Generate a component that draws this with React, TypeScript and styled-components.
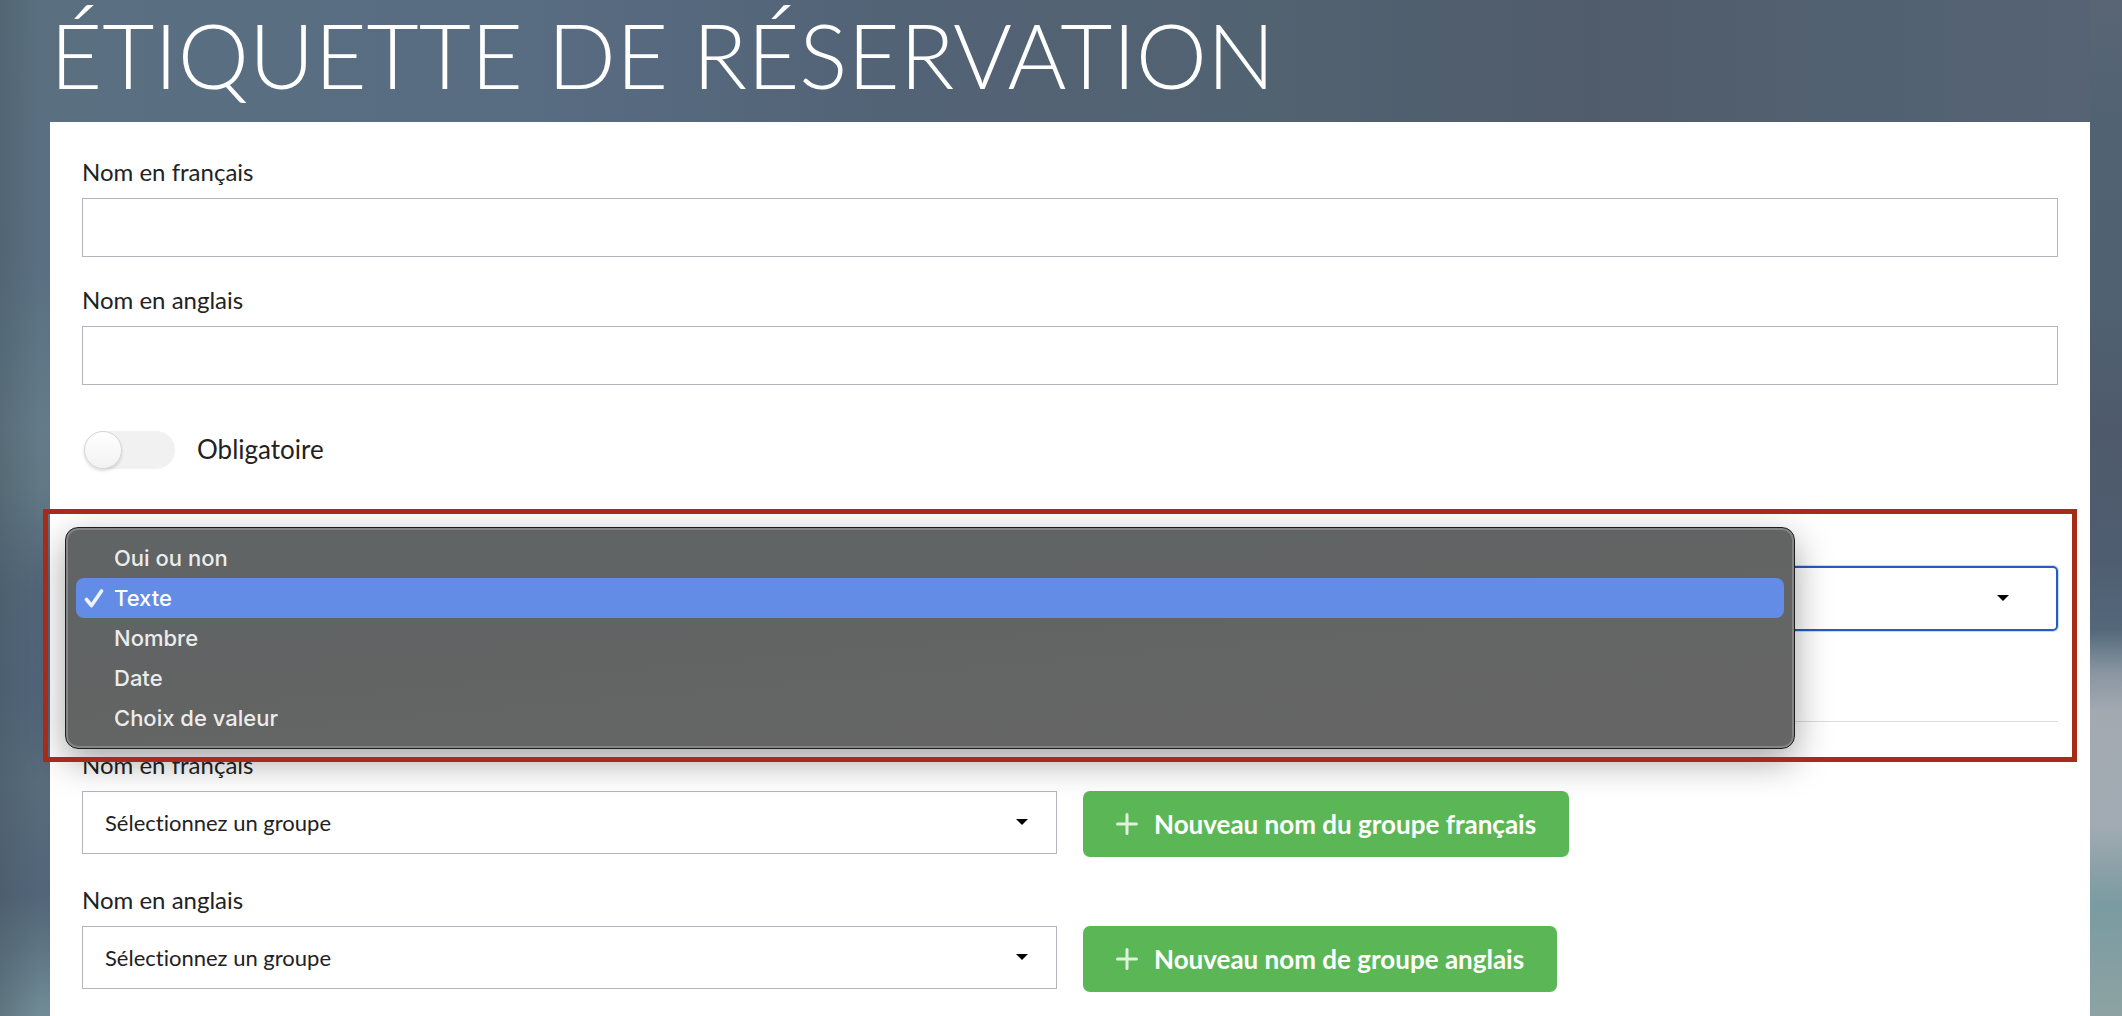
import React, { useState } from "react";
import styled, { createGlobalStyle } from "styled-components";

const GlobalStyle = createGlobalStyle`
  *, *::before, *::after { box-sizing: border-box; }
  html { height: 100%; }
  body {
    margin: 0;
    min-height: 100%;
    overflow: hidden;
    font-family: Lato, "Liberation Sans", sans-serif;
    font-variant-ligatures: none;
    color: #222;
    background: linear-gradient(90deg, #5a7080 0%, #586c82 25%, #536376 42%, #516271 60%, #505c6c 75%, #526171 88%, #566374 100%);
  }
`;

const Page = styled.div`
  position: relative;
  height: 100vh;
  padding: 0 32px 0 50px;
  overflow: hidden;
  background:
    linear-gradient(90deg, rgba(70, 85, 95, 0.4), transparent 40px),
    linear-gradient(180deg, #5a7080 0%, #5a6f82 25%, #5c7484 32%, #647b89 42%, #617885 48%, #53677a 58%, #51657a 68%, #586c7c 77%, #526579 88%, #5d7483 93%, #718c97 100%) left / 50px 100% no-repeat,
    linear-gradient(180deg, #596575 0%, #516272 12%, #506171 30%, #4e5a6c 42%, #4f5d70 55%, #53687a 62%, #8794a0 66%, #a2a9b1 70%, #a2abb3 81%, #8ea2a8 85%, #7a9ba2 89%, #8da3a3 100%) right / 32px 100% no-repeat;
`;

const Title = styled.h1`
  margin: 0;
  padding-bottom: 14px;
  font-size: 90px;
  line-height: 108px;
  font-weight: 300;
  color: #fff;
  white-space: nowrap;
`;

const Card = styled.main`
  min-height: 100vh;
  padding: 32px;
  background: #fff;
`;

const Form = styled.form`
  display: flex;
  flex-direction: column;
`;

const Field = styled.div`
  display: flex;
  flex-direction: column;
  gap: 8px;
  margin-bottom: 25px;
`;

const Label = styled.label`
  font-size: 24px;
  line-height: 36px;
`;

const TextInput = styled.input`
  height: 59px;
  padding: 0 22px;
  border: 1px solid #b3b5ba;
  border-radius: 0;
  font: inherit;
  font-size: 22px;
  outline: none;
`;

const Switch = styled.label`
  display: flex;
  align-items: flex-start;
  align-self: flex-start;
  gap: 22px;
  height: 38px;
  margin: 21px 0 57px 2px;
  font-size: 26px;
  line-height: 36px;
`;

const SwitchInput = styled.input`
  appearance: none;
  width: 91px;
  height: 38px;
  margin: 0;
  border-radius: 19px;
  background: #f1f1f1;
  &::before {
    content: "";
    display: block;
    width: 38px;
    height: 38px;
    border: 1px solid #d6d6d6;
    border-radius: 50%;
    background: linear-gradient(#fff, #f2f2f2);
    box-shadow: 0 2px 3px rgba(0, 0, 0, 0.14);
  }
  &:checked::before { margin-left: auto; }
`;

const TypeSection = styled.section`
  position: relative;
  padding: 40px 0 90px;
  margin-bottom: 25px;
  border-bottom: 1px solid #dcdcdc;
`;

const Highlight = styled.div`
  position: absolute;
  z-index: 2;
  inset: -17px -19px -41px -39px;
  border: 5px solid #a62b18;
  pointer-events: none;
`;

const SelectBox = styled.div`
  position: relative;
  flex: 1;
`;

const Select = styled.select<{ $focused?: boolean }>`
  display: block;
  appearance: none;
  width: 100%;
  height: ${(p) => (p.$focused ? 65 : 63)}px;
  padding: 0 56px 0 22px;
  border: ${(p) => (p.$focused ? "2px solid #245cc4" : "1px solid #b3b5ba")};
  border-radius: ${(p) => (p.$focused ? 5 : 0)}px;
  box-shadow: ${(p) => (p.$focused ? "0 0 0 1px #c6dbf6" : "none")};
  background: transparent;
  color: #222;
  font: inherit;
  font-size: 22px;
  font-variant-ligatures: none;
  outline: none;
`;

const Caret = styled.svg<{ $inset: number }>`
  position: absolute;
  top: 50%;
  right: ${(p) => p.$inset}px;
  width: 12px;
  height: 6px;
  margin-top: -4px;
  pointer-events: none;
`;

const Menu = styled.ul`
  position: absolute;
  z-index: 1;
  top: 1px;
  left: -17px;
  right: 263px;
  margin: 0;
  padding: 10px;
  list-style: none;
  border: 1px solid #1d1d1d;
  border-radius: 13px;
  background: linear-gradient(175deg, #606464, #626464 45%, #656565 80%);
  box-shadow: inset 0 0 0 2px #858585, 0 12px 36px rgba(0, 0, 0, 0.36);
  font-family: Inter, "Liberation Sans", sans-serif;
  font-size: 22px;
  font-weight: 500;
  line-height: 40px;
`;

const MenuItem = styled.li<{ $selected: boolean }>`
  display: flex;
  align-items: center;
  height: 40px;
  border-radius: 8px;
  color: ${(p) => (p.$selected ? "#fff" : "#ececec")};
  background: ${(p) => (p.$selected ? "#628ce5" : "transparent")};
`;

const CheckSlot = styled.span`
  display: flex;
  width: 38px;
  padding-left: 8px;
`;

const GroupRow = styled.div`
  display: flex;
  align-items: flex-start;
  gap: 26px;
`;

const GroupSelectCell = styled.div`
  display: flex;
  width: calc(50% - 13px);
`;

const AddButton = styled.button`
  display: flex;
  align-items: center;
  gap: 16px;
  height: 66px;
  padding: 0 33px;
  border: 0;
  border-radius: 7px;
  background: #5bb756;
  color: #fff;
  font: inherit;
  font-size: 26px;
  font-weight: 700;
  line-height: 32px;
  white-space: nowrap;
`;

const types = ["Oui ou non", "Texte", "Nombre", "Date", "Choix de valeur"];

const groups = [
  { id: "group-fr", label: "Nom en français", action: "Nouveau nom du groupe français" },
  { id: "group-en", label: "Nom en anglais", action: "Nouveau nom de groupe anglais" },
];

function CaretIcon({ inset }: { inset: number }) {
  return (
    <Caret $inset={inset} viewBox="0 0 12 6" aria-hidden="true">
      <path d="M0 0H12L6 6Z" fill="#000" />
    </Caret>
  );
}

export default function App() {
  const [type, setType] = useState("Texte");
  return (
    <>
      <GlobalStyle />
      <Page>
        <Title>ÉTIQUETTE DE RÉSERVATION</Title>
        <Card>
          <Form>
            <Field>
              <Label htmlFor="name-fr">Nom en français</Label>
              <TextInput id="name-fr" type="text" />
            </Field>
            <Field>
              <Label htmlFor="name-en">Nom en anglais</Label>
              <TextInput id="name-en" type="text" />
            </Field>
            <Switch>
              <SwitchInput type="checkbox" role="switch" />
              Obligatoire
            </Switch>
            <TypeSection>
              <SelectBox>
                <Select $focused aria-label="Type" value={type} onChange={(e) => setType(e.target.value)}>
                  {types.map((t) => (
                    <option key={t}>{t}</option>
                  ))}
                </Select>
                <CaretIcon inset={49} />
              </SelectBox>
              <Menu>
                {types.map((t) => (
                  <MenuItem key={t} $selected={t === type} onClick={() => setType(t)}>
                    <CheckSlot>
                      {t === type && (
                        <svg width="20" height="20" viewBox="0 0 20 20" aria-hidden="true">
                          <path d="M2.5 11.5L7.5 17.5L17.5 3" fill="none" stroke="#eef3ff" strokeWidth="3.6" strokeLinecap="round" strokeLinejoin="round" />
                        </svg>
                      )}
                    </CheckSlot>
                    {t}
                  </MenuItem>
                ))}
              </Menu>
              <Highlight />
            </TypeSection>
            {groups.map((g) => (
              <Field key={g.id}>
                <Label htmlFor={g.id}>{g.label}</Label>
                <GroupRow>
                  <GroupSelectCell>
                    <SelectBox>
                      <Select id={g.id}>
                        <option>Sélectionnez un groupe</option>
                      </Select>
                      <CaretIcon inset={29} />
                    </SelectBox>
                  </GroupSelectCell>
                  <AddButton type="button">
                    <svg width="22" height="22" viewBox="0 0 22 22" aria-hidden="true">
                      <path d="M11 1.5V20.5M1.5 11H20.5" stroke="#def1dd" strokeWidth="3" strokeLinecap="round" />
                    </svg>
                    {g.action}
                  </AddButton>
                </GroupRow>
              </Field>
            ))}
          </Form>
        </Card>
      </Page>
    </>
  );
}
